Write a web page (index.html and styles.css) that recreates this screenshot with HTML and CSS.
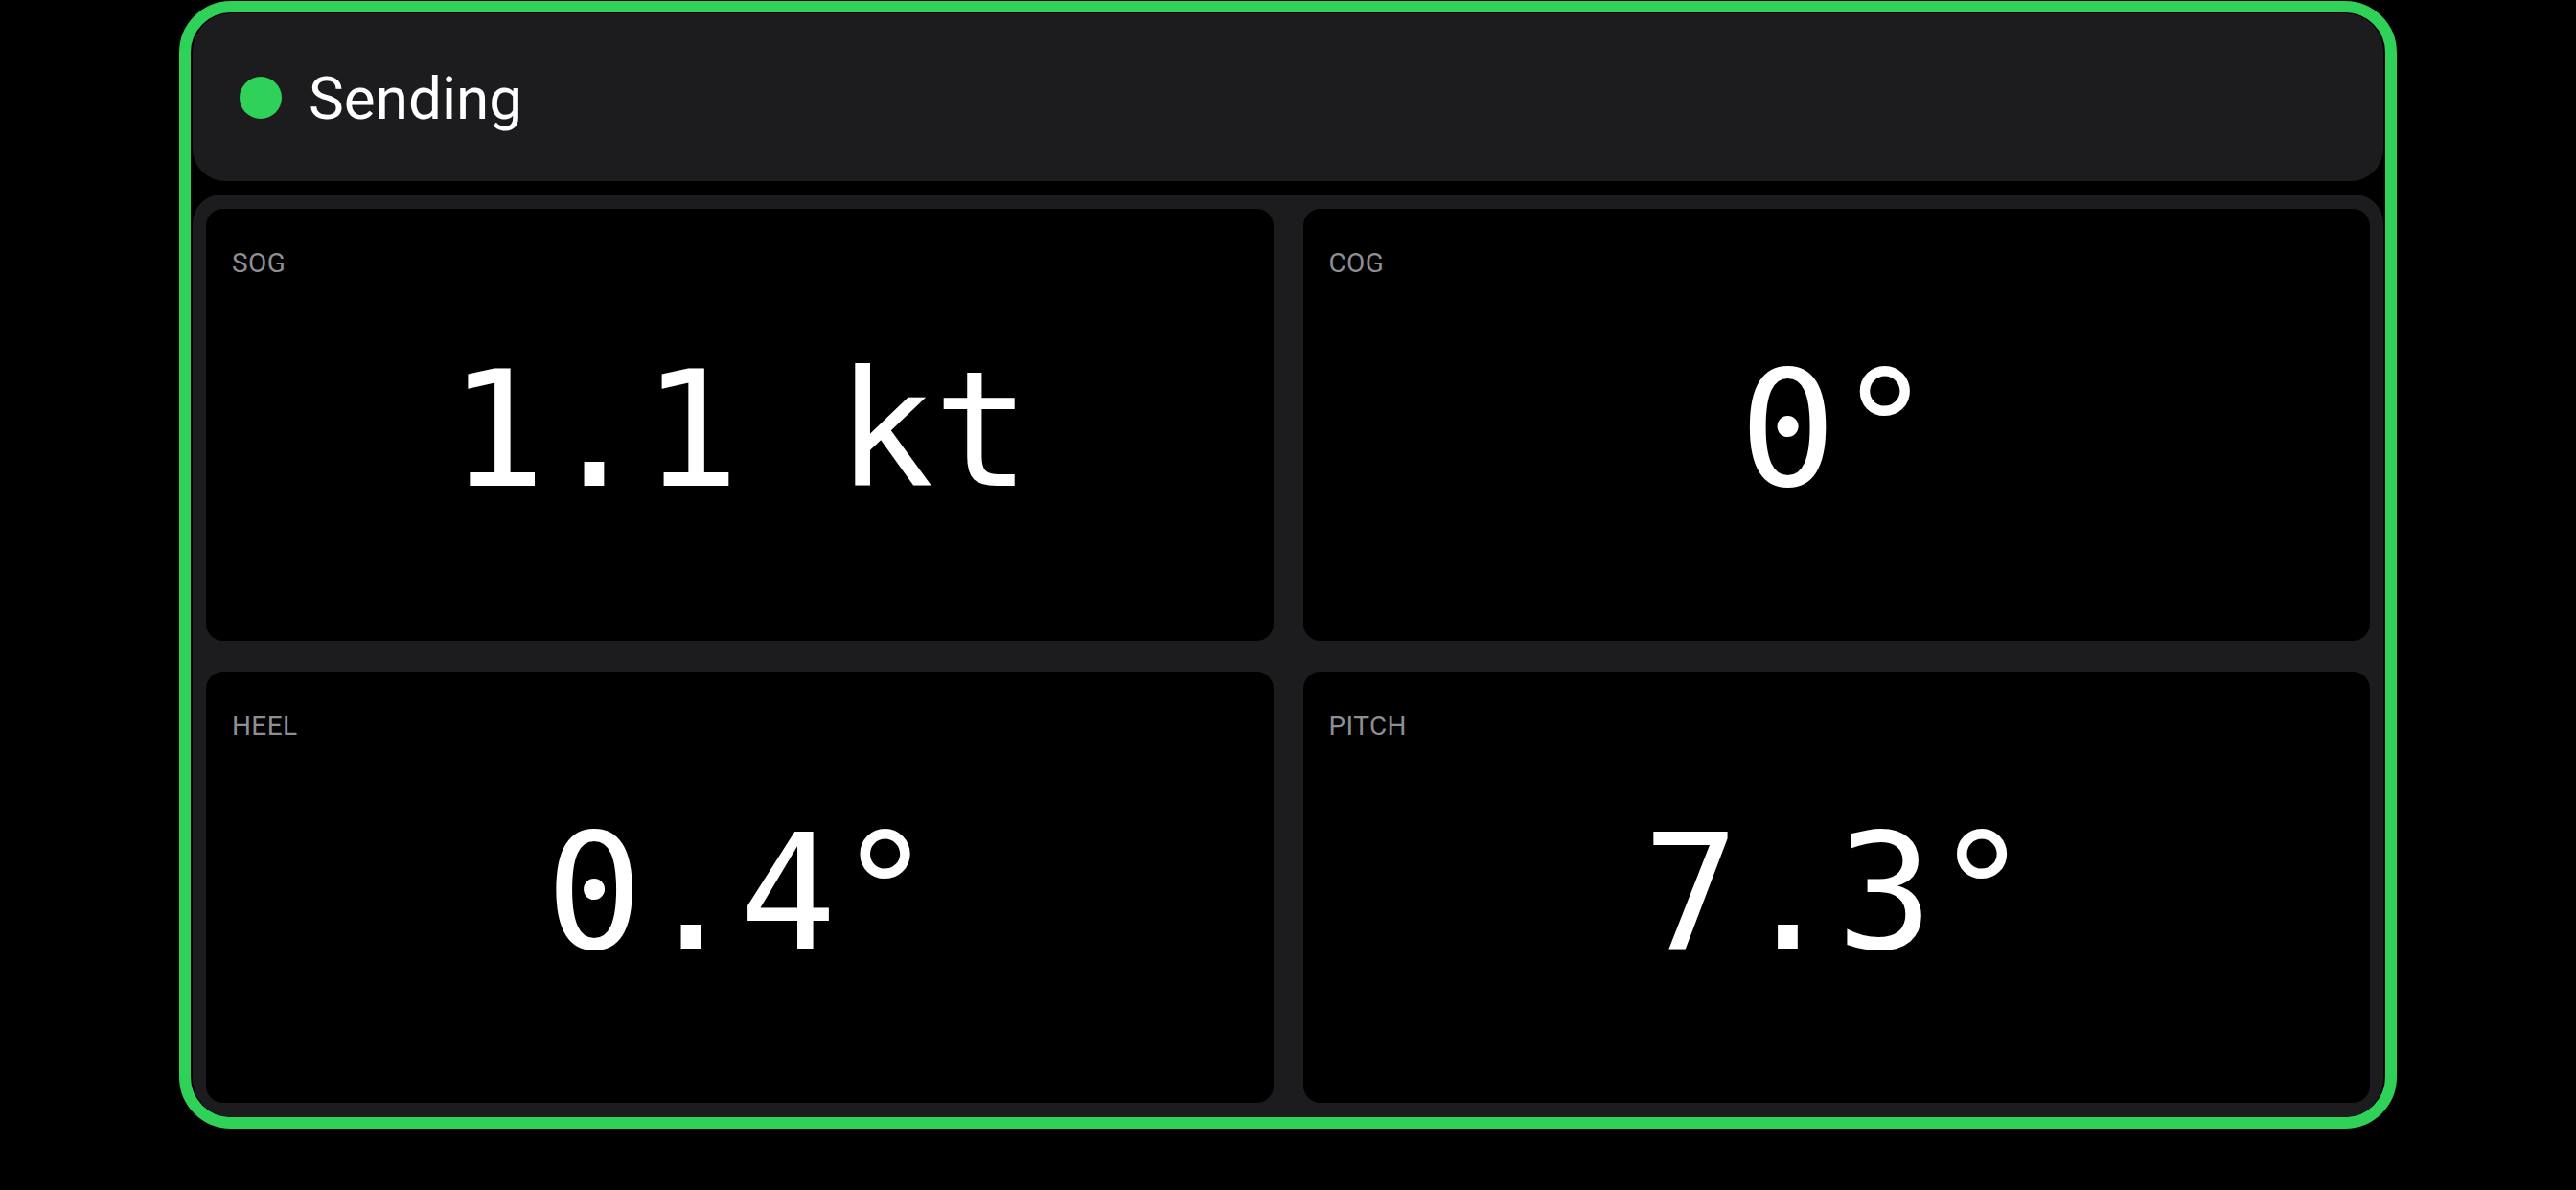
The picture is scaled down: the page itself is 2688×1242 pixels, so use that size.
FILE: index.html
```html
<!DOCTYPE html>
<html>
<head>
<meta charset="utf-8">
<link rel="stylesheet" href="styles.css">
</head>
<body>
<div class="panel">
  <div class="header">
    <span class="dot"></span>
    <span class="status">Sending</span>
  </div>
  <div class="grid">
    <div class="cell">
      <div class="label">SOG</div>
      <div class="value">1.1 kt</div>
    </div>
    <div class="cell">
      <div class="label">COG</div>
      <div class="value">0°</div>
    </div>
    <div class="cell">
      <div class="label">HEEL</div>
      <div class="value">0.4°</div>
    </div>
    <div class="cell">
      <div class="label">PITCH</div>
      <div class="value">7.3°</div>
    </div>
  </div>
</div>
</body>
</html>
```

FILE: styles.css
```css
html, body {
  margin: 0;
  padding: 0;
  background: #000;
}
body {
  width: 2688px;
  height: 1242px;
  overflow: hidden;
  font-family: Roboto, "Liberation Sans", sans-serif;
}
.panel {
  box-sizing: border-box;
  margin: 1px 0 0 187px;
  width: 2314px;
  height: 1177px;
  border: 12px solid #30d158;
  border-radius: 54px;
  padding: 1px 2px 0 2px;
  display: flex;
  flex-direction: column;
  gap: 14px;
  overflow: hidden;
}
.header {
  height: 175px;
  flex: none;
  background: #1c1c1e;
  border-radius: 40px 40px 34px 34px;
  display: flex;
  align-items: center;
  padding-left: 49px;
  gap: 28px;
}
.dot {
  width: 44px;
  height: 44px;
  border-radius: 50%;
  background: #30d158;
  flex: none;
}
.status {
  color: #fff;
  font-size: 62px;
  line-height: 1;
  padding-top: 2px;
}
.grid {
  flex: 1;
  background: #1c1c1e;
  border-radius: 30px 30px 40px 40px;
  padding: 15px 14px;
  display: grid;
  grid-template-columns: 1fr 1fr;
  grid-template-rows: 1fr 1fr;
  gap: 32px 31px;
}
.cell {
  background: #000;
  border-radius: 18px;
  display: grid;
}
.label {
  grid-area: 1 / 1;
  align-self: start;
  justify-self: start;
  padding: 40px 0 0 27px;
  color: #8e8e93;
  font-size: 28px;
  line-height: 1.2;
  letter-spacing: 0.4px;
}
.value {
  grid-area: 1 / 1;
  align-self: center;
  justify-self: center;
  color: #fff;
  font-family: "DejaVu Sans Mono", "Liberation Mono", monospace;
  font-size: 168px;
  line-height: 1;
  padding-top: 12px;
}
```
